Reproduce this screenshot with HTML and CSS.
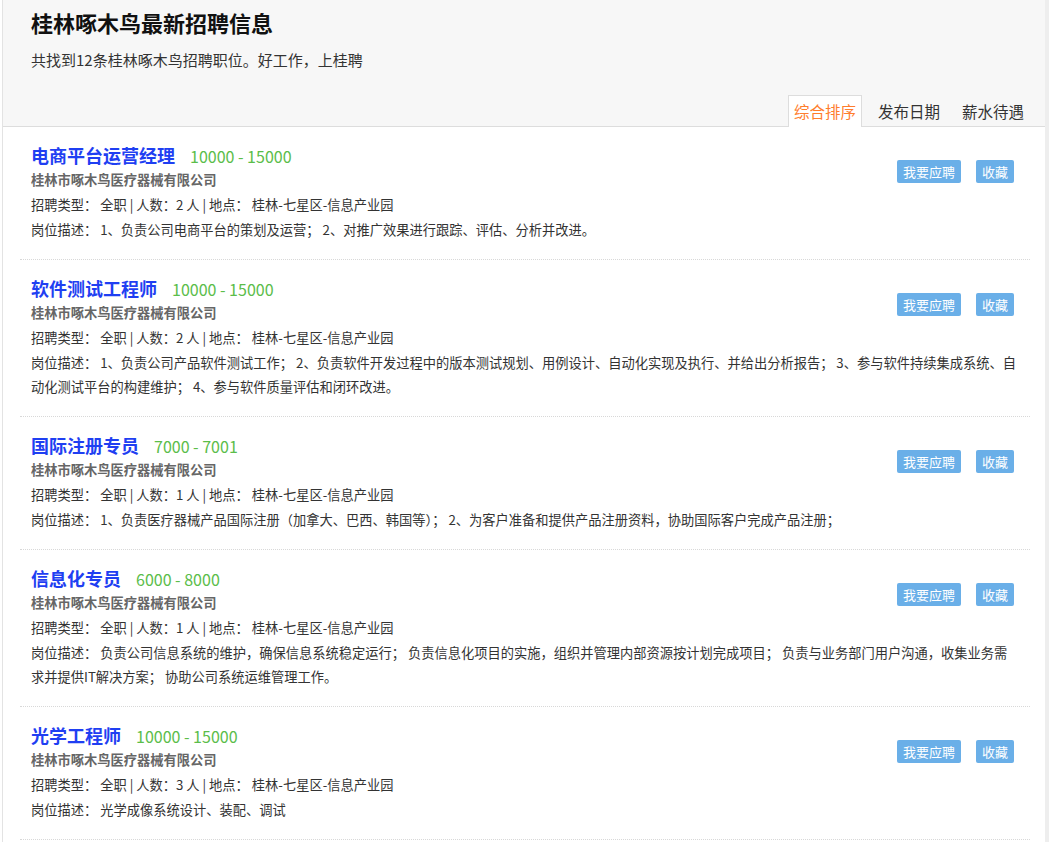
FILE: index.html
```html
<!DOCTYPE html>
<html lang="zh-CN">
<head>
    <meta charset="UTF-8">
    <meta name="viewport" content="width=device-width, initial-scale=1.0">
    <title>桂林啄木鸟最新招聘信息</title>
    <link rel="stylesheet" href="styles.css">
</head>
<body>
    <div class="page">
        <div class="header">
            <h1>桂林啄木鸟最新招聘信息</h1>
            <p class="summary">共找到12条桂林啄木鸟招聘职位。好工作，上桂聘</p>
            <div class="tabs">
                <a class="tab active" href="#">综合排序</a>
                <a class="tab" href="#">发布日期</a>
                <a class="tab" href="#">薪水待遇</a>
            </div>
        </div>

        <div class="job-list">
            <div class="job">
                <div class="actions">
                    <a class="btn" href="#">我要应聘</a>
                    <a class="btn" href="#">收藏</a>
                </div>
                <div class="job-title"><a href="#">电商平台运营经理</a><span class="salary">10000 - 15000</span></div>
                <div class="company">桂林市啄木鸟医疗器械有限公司</div>
                <div class="meta">招聘类型： 全职 | 人数：2 人 | 地点： 桂林-七星区-信息产业园</div>
                <div class="desc">岗位描述： 1、负责公司电商平台的策划及运营； 2、对推广效果进行跟踪、评估、分析并改进。</div>
            </div>

            <div class="job">
                <div class="actions">
                    <a class="btn" href="#">我要应聘</a>
                    <a class="btn" href="#">收藏</a>
                </div>
                <div class="job-title"><a href="#">软件测试工程师</a><span class="salary">10000 - 15000</span></div>
                <div class="company">桂林市啄木鸟医疗器械有限公司</div>
                <div class="meta">招聘类型： 全职 | 人数：2 人 | 地点： 桂林-七星区-信息产业园</div>
                <div class="desc">岗位描述： 1、负责公司产品软件测试工作； 2、负责软件开发过程中的版本测试规划、用例设计、自动化实现及执行、并给出分析报告； 3、参与软件持续集成系统、自动化测试平台的构建维护； 4、参与软件质量评估和闭环改进。</div>
            </div>

            <div class="job">
                <div class="actions">
                    <a class="btn" href="#">我要应聘</a>
                    <a class="btn" href="#">收藏</a>
                </div>
                <div class="job-title"><a href="#">国际注册专员</a><span class="salary">7000 - 7001</span></div>
                <div class="company">桂林市啄木鸟医疗器械有限公司</div>
                <div class="meta">招聘类型： 全职 | 人数：1 人 | 地点： 桂林-七星区-信息产业园</div>
                <div class="desc">岗位描述： 1、负责医疗器械产品国际注册（加拿大、巴西、韩国等）； 2、为客户准备和提供产品注册资料，协助国际客户完成产品注册；</div>
            </div>

            <div class="job">
                <div class="actions">
                    <a class="btn" href="#">我要应聘</a>
                    <a class="btn" href="#">收藏</a>
                </div>
                <div class="job-title"><a href="#">信息化专员</a><span class="salary">6000 - 8000</span></div>
                <div class="company">桂林市啄木鸟医疗器械有限公司</div>
                <div class="meta">招聘类型： 全职 | 人数：1 人 | 地点： 桂林-七星区-信息产业园</div>
                <div class="desc">岗位描述： 负责公司信息系统的维护，确保信息系统稳定运行； 负责信息化项目的实施，组织并管理内部资源按计划完成项目； 负责与业务部门用户沟通，收集业务需求并提供IT解决方案； 协助公司系统运维管理工作。</div>
            </div>

            <div class="job">
                <div class="actions">
                    <a class="btn" href="#">我要应聘</a>
                    <a class="btn" href="#">收藏</a>
                </div>
                <div class="job-title"><a href="#">光学工程师</a><span class="salary">10000 - 15000</span></div>
                <div class="company">桂林市啄木鸟医疗器械有限公司</div>
                <div class="meta">招聘类型： 全职 | 人数：3 人 | 地点： 桂林-七星区-信息产业园</div>
                <div class="desc">岗位描述： 光学成像系统设计、装配、调试</div>
            </div>
        </div>
    </div>
</body>
</html>
```

FILE: styles.css
```css
body {
    margin: 0;
    font-family: "Noto Sans CJK SC", "Noto Sans", sans-serif;
    font-size: 13.25px;
    color: #333;
    background: #fff;
}

a {
    text-decoration: none;
}

.page {
    margin-left: 2px;
    border-left: 1px solid #e3e3e3;
    border-right: 4px solid #eeeeee;
    min-height: 842px;
}

.header {
    background: #f7f7f7;
    border-bottom: 1px solid #dddddd;
    padding: 7px 0 0 28px;
}

.header h1 {
    margin: 0;
    font-size: 22px;
    line-height: 30px;
    font-weight: bold;
    color: #111;
}

.summary {
    margin: 12px 0 0;
    font-size: 15px;
    line-height: 22px;
    color: #333;
}

.tabs {
    display: flex;
    justify-content: flex-end;
    gap: 10px;
    margin-top: 24px;
    padding-right: 15px;
}

.tab {
    display: block;
    padding: 0 5px;
    border: 1px solid transparent;
    border-bottom: none;
    font-size: 15.5px;
    line-height: 30px;
    color: #333;
    margin-bottom: -1px;
}

.tab.active {
    background: #fff;
    border-color: #dddddd;
    color: #ff7d2d;
    height: 31px;
}

.job-list {
    padding: 0 15px 0 17px;
}

.job {
    padding: 17px 11px 17px;
    border-bottom: 1px dotted #d8d8d8;
    line-height: 24px;
}

.actions {
    float: right;
    display: flex;
    gap: 15px;
    margin: 16px 5px 0 15px;
}

.btn {
    display: block;
    background: #6aafe8;
    color: #fff;
    font-size: 13px;
    line-height: 23px;
    padding: 0 6px;
    border-radius: 2px;
}

.job-title {
    font-size: 18px;
    line-height: 23px;
    height: 23px;
    margin-bottom: 1px;
}

.job-title a {
    font-weight: bold;
    color: #1f3ff2;
}

.salary {
    margin-left: 15px;
    font-size: 16px;
    color: #5bbd4a;
}

.company {
    font-weight: bold;
    color: #666;
}

.meta,
.desc {
    margin-top: 1px;
}
```
